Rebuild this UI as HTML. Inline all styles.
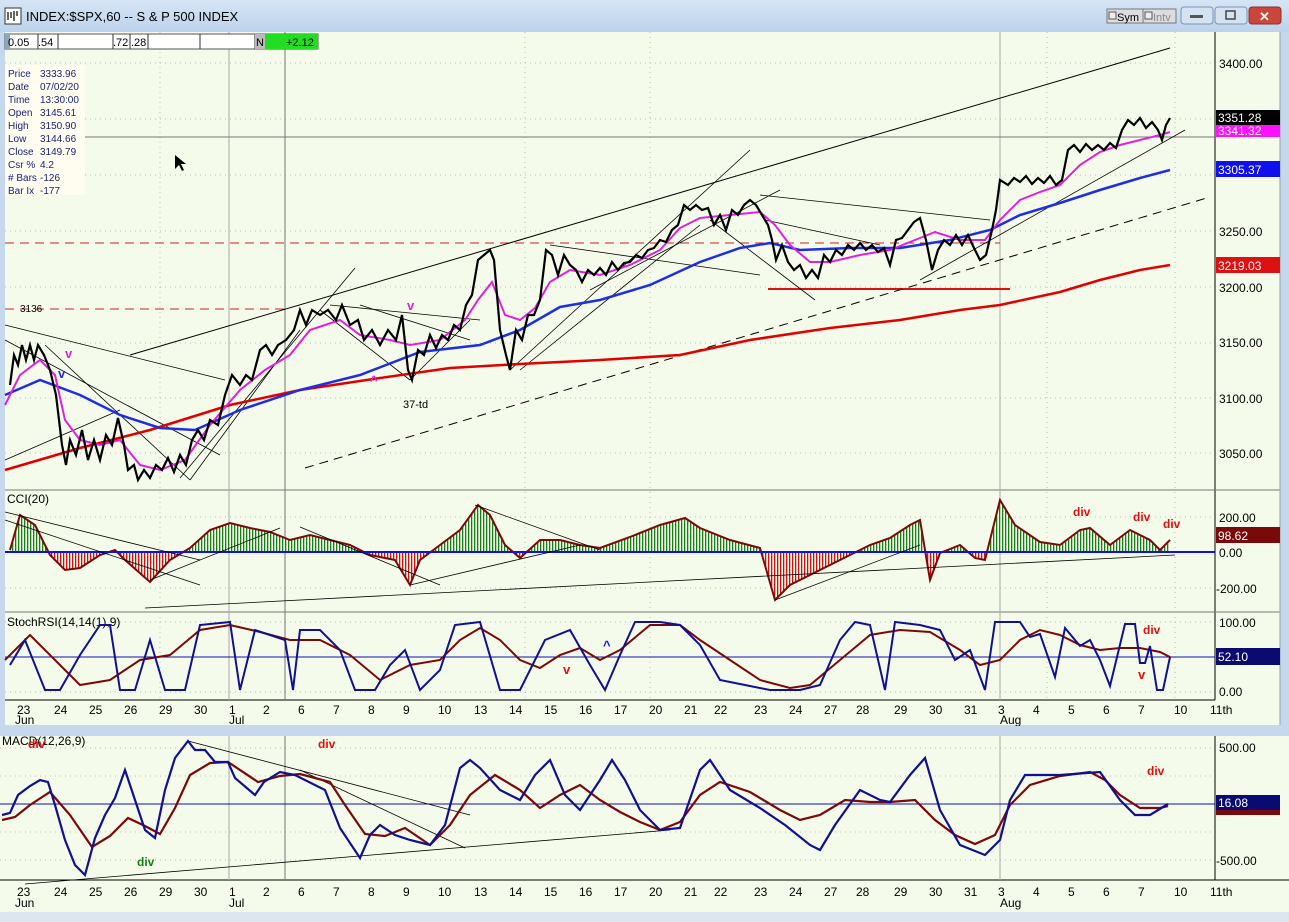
<!DOCTYPE html>
<html><head><meta charset="utf-8"><style>
body{margin:0;width:1289px;height:922px;overflow:hidden;background:#dfe8f2;font-family:"Liberation Sans",sans-serif}
svg{display:block}
text{font-family:"Liberation Sans",sans-serif}
</style></head><body>
<svg width="1289" height="922" viewBox="0 0 1289 922" xmlns="http://www.w3.org/2000/svg">
<defs>
<linearGradient id="tb" x1="0" y1="0" x2="0" y2="1"><stop offset="0" stop-color="#d6e5f5"/><stop offset="1" stop-color="#bcd3ec"/></linearGradient>
<pattern id="gp" width="3" height="10" patternUnits="userSpaceOnUse"><rect width="3" height="10" fill="#f5fbea"/><rect width="1.3" height="10" fill="#138013"/></pattern>
<pattern id="rp" width="3" height="10" patternUnits="userSpaceOnUse"><rect width="3" height="10" fill="#f5fbea"/><rect width="1.3" height="10" fill="#d01010"/></pattern>
<clipPath id="above"><rect x="0" y="480" width="1215" height="72"/></clipPath>
<clipPath id="below"><rect x="0" y="552" width="1215" height="60"/></clipPath>
</defs>
<!-- window frame -->
<rect x="0" y="0" width="1289" height="922" fill="#c5d8ee"/>
<rect x="0" y="0" width="1289" height="32" fill="url(#tb)"/>
<rect x="5" y="8" width="16" height="16" fill="#fff" stroke="#333"/>
<path d="M8 20v-8M11 18v-6M14 21v-10M17 16v-5" stroke="#000" stroke-width="1.2"/>
<text x="26" y="21" font-size="13" fill="#000">INDEX:$SPX,60 -- S &amp; P 500 INDEX</text>
<rect x="1107" y="9" width="36" height="14" fill="#ddd" stroke="#777"/><rect x="1109" y="12" width="7" height="7" fill="#eee" stroke="#555"/><text x="1117" y="21" font-size="11">Sym</text>
<rect x="1143" y="9" width="33" height="14" fill="#ddd" stroke="#777"/><rect x="1145" y="12" width="7" height="7" fill="#eee" stroke="#555"/><text x="1153" y="21" font-size="11" fill="#888">Intv</text>
<rect x="1181" y="7" width="32" height="17" rx="3" fill="#d5e2f0" stroke="#7b93b3"/><rect x="1190" y="15" width="13" height="3" fill="#555"/>
<rect x="1215" y="7" width="32" height="17" rx="3" fill="#d5e2f0" stroke="#7b93b3"/><rect x="1226" y="11" width="9" height="8" fill="none" stroke="#444" stroke-width="1.5"/>
<rect x="1249" y="7" width="32" height="17" rx="3" fill="#c9463a" stroke="#8a3030"/><text x="1259" y="21" font-size="13" fill="#fff" font-weight="bold">✕</text>
<!-- top chart area -->
<rect x="5" y="32" width="1275" height="693" fill="#f5fbea"/>
<rect x="1215" y="32" width="65" height="693" fill="#f5fbea"/>
<line x1="1215" y1="32" x2="1215" y2="700" stroke="#000"/>
<line x1="5" y1="490" x2="1280" y2="490" stroke="#777"/>
<line x1="5" y1="612" x2="1280" y2="612" stroke="#777"/>
<line x1="5" y1="700" x2="1215" y2="700" stroke="#000"/>
<line x1="1280" y1="32" x2="1280" y2="725" stroke="#8aa"/>
<!-- grid dotted -->
<g stroke="#b9c0b0" stroke-dasharray="1,4">
<line x1="5" y1="63" x2="1215" y2="63"/><line x1="5" y1="119" x2="1215" y2="119"/><line x1="5" y1="175" x2="1215" y2="175"/><line x1="5" y1="231" x2="1215" y2="231"/><line x1="5" y1="287" x2="1215" y2="287"/><line x1="5" y1="343" x2="1215" y2="343"/><line x1="5" y1="398" x2="1215" y2="398"/><line x1="5" y1="453" x2="1215" y2="453"/>
<line x1="5" y1="517" x2="1215" y2="517"/><line x1="5" y1="588" x2="1215" y2="588"/>
<line x1="5" y1="622" x2="1215" y2="622"/><line x1="5" y1="692" x2="1215" y2="692"/>
<line x1="160" y1="32" x2="160" y2="700"/><line x1="525" y1="32" x2="525" y2="700"/><line x1="650" y1="32" x2="650" y2="700"/><line x1="1047" y1="32" x2="1047" y2="700"/><line x1="1175" y1="32" x2="1175" y2="700"/>
</g>
<line x1="229" y1="32" x2="229" y2="700" stroke="#aaa"/>
<line x1="1000" y1="32" x2="1000" y2="700" stroke="#aaa"/>
<line x1="285" y1="32" x2="285" y2="700" stroke="#777"/>
<line x1="5" y1="137" x2="1215" y2="137" stroke="#777"/>
<!-- top info strip -->
<rect x="5" y="34" width="313" height="15" fill="#fff" stroke="#555"/>
<rect x="5" y="34" width="5" height="15" fill="#8ab"/>
<g stroke="#333"><line x1="38" y1="34" x2="38" y2="49"/><line x1="58" y1="34" x2="58" y2="49"/><line x1="113" y1="34" x2="113" y2="49"/><line x1="130" y1="34" x2="130" y2="49"/><line x1="148" y1="34" x2="148" y2="49"/><line x1="200" y1="34" x2="200" y2="49"/><line x1="255" y1="34" x2="255" y2="49"/></g>
<text font-size="11" y="46"><tspan x="8">0.05</tspan><tspan x="38">.54</tspan><tspan x="113">.72</tspan><tspan x="131">.28</tspan></text>
<rect x="255" y="34" width="10" height="15" fill="#bbb"/><text x="256" y="46" font-size="11">N</text>
<rect x="265" y="34" width="53" height="15" fill="#22dd22"/><text x="286" y="46" font-size="11">+2.12</text>
<rect x="5" y="65" width="80" height="130" fill="#fffcf0"/>
<g font-size="10" fill="#1a237e">
<text x="8" y="77">Price</text><text x="40" y="77">3333.96</text>
<text x="8" y="90">Date</text><text x="40" y="90">07/02/20</text>
<text x="8" y="103">Time</text><text x="40" y="103">13:30:00</text>
<text x="8" y="116">Open</text><text x="40" y="116">3145.61</text>
<text x="8" y="129">High</text><text x="40" y="129">3150.90</text>
<text x="8" y="142">Low</text><text x="40" y="142">3144.66</text>
<text x="8" y="155">Close</text><text x="40" y="155">3149.79</text>
<text x="8" y="168">Csr %</text><text x="40" y="168">4.2</text>
<text x="8" y="181"># Bars</text><text x="40" y="181">-126</text>
<text x="8" y="194">Bar Ix</text><text x="40" y="194">-177</text>
</g>
<path d="M175 155 l0 14 l4 -4 l3 6 l2 -1 l-3 -6 l5 0 z" fill="#000"/>
<!-- reference lines -->
<line x1="5" y1="243" x2="1000" y2="243" stroke="#c22" stroke-dasharray="9,6"/>
<line x1="5" y1="309" x2="290" y2="309" stroke="#c22" stroke-dasharray="9,6"/>
<text x="20" y="312" font-size="10">3136</text>
<line x1="768" y1="289" x2="1010" y2="289" stroke="#e01010" stroke-width="2"/>
<line x1="130" y1="355" x2="1170" y2="48" stroke="#000"/>
<line x1="305" y1="468" x2="1210" y2="197" stroke="#000" stroke-dasharray="9,6"/>
<g stroke="#000" stroke-width="0.8" fill="none">
<line x1="5" y1="325" x2="225" y2="380"/><line x1="5" y1="340" x2="220" y2="455"/><line x1="5" y1="460" x2="120" y2="410"/><line x1="45" y1="345" x2="190" y2="480"/>
<line x1="180" y1="478" x2="355" y2="268"/><line x1="190" y1="480" x2="300" y2="330"/><line x1="330" y1="305" x2="480" y2="320"/><line x1="320" y1="310" x2="410" y2="380"/>
<line x1="360" y1="305" x2="470" y2="340"/><line x1="410" y1="380" x2="470" y2="320"/><line x1="510" y1="370" x2="750" y2="150"/><line x1="520" y1="370" x2="700" y2="225"/>
<line x1="550" y1="245" x2="760" y2="275"/><line x1="590" y1="290" x2="780" y2="190"/><line x1="710" y1="220" x2="815" y2="300"/><line x1="760" y1="195" x2="990" y2="220"/>
<line x1="920" y1="280" x2="1185" y2="130"/><line x1="765" y1="220" x2="880" y2="245"/>
</g>
<!-- MAs -->
<polyline fill="none" stroke="#d81b60" stroke-width="0" points=""/>
<polyline fill="none" stroke="#e10000" stroke-width="2.5" points="5,470 80,448 150,430 230,405 300,390 380,378 450,368 520,364 600,360 680,355 750,340 830,328 900,320 960,310 1000,305 1060,292 1100,280 1140,270 1170,265"/>
<polyline fill="none" stroke="#1f2ee0" stroke-width="2.5" points="5,395 40,380 80,395 120,415 160,428 195,430 240,410 300,390 360,375 420,352 480,345 520,330 560,307 600,300 650,285 700,262 740,248 770,243 800,250 850,248 900,248 950,240 990,230 1020,215 1060,203 1100,190 1140,178 1170,170"/>
<polyline fill="none" stroke="#e020e0" stroke-width="2" points="5,405 20,375 40,360 55,375 65,420 80,440 100,445 120,440 140,465 160,470 185,460 210,425 240,390 265,370 290,355 310,330 340,320 360,335 390,340 410,345 440,340 465,320 478,300 492,282 505,315 520,320 535,308 550,282 570,270 600,275 630,265 660,250 680,228 700,218 730,215 760,212 775,225 790,245 810,262 830,262 860,255 890,250 915,240 935,232 960,240 985,240 1000,220 1020,200 1040,192 1060,185 1080,165 1100,152 1120,145 1140,140 1160,135 1170,132"/>
<!-- price bars -->
<polyline fill="none" stroke="#000" stroke-width="2.2" stroke-linejoin="miter" points="10,385 14,355 18,365 22,345 26,360 30,345 34,360 38,345 44,355 50,370 56,395 62,445 66,465 70,440 76,455 82,430 88,460 94,440 100,460 106,435 112,445 118,418 124,445 128,470 134,465 138,480 144,470 150,478 156,465 162,470 168,458 174,472 180,455 186,465 192,440 198,430 204,440 210,420 218,425 225,395 232,375 240,385 246,375 252,380 260,350 266,345 272,355 278,345 286,340 294,330 300,310 306,325 312,310 320,315 328,310 336,320 342,305 350,325 358,320 364,340 372,330 380,345 388,330 396,340 402,315 408,370 412,380 418,350 424,355 430,335 436,348 442,335 448,340 454,325 460,330 466,305 472,295 478,260 484,255 490,250 494,260 500,330 506,355 510,370 516,330 522,340 528,315 534,315 540,300 546,250 552,255 558,275 564,255 570,265 576,270 582,282 588,270 594,275 600,268 606,275 612,262 618,270 624,263 630,262 636,255 642,258 648,250 654,248 660,240 666,242 672,230 678,225 684,205 690,210 696,205 702,210 708,208 714,225 720,215 726,230 732,210 738,215 744,205 750,200 756,205 762,215 768,225 772,240 776,260 782,245 788,262 794,270 800,265 806,278 812,270 818,278 824,255 830,262 836,250 842,255 848,245 854,250 860,243 866,250 872,245 878,252 884,248 890,265 896,240 902,238 908,230 914,222 920,218 926,240 932,270 938,250 944,240 950,245 956,235 962,245 968,235 974,248 980,260 986,255 992,230 996,210 1000,180 1008,185 1014,178 1020,182 1026,176 1032,184 1038,178 1044,183 1050,176 1056,185 1062,180 1068,150 1074,145 1080,152 1086,144 1092,150 1098,145 1104,150 1110,143 1116,148 1122,130 1128,120 1134,125 1140,118 1146,128 1152,122 1158,130 1162,140 1166,125 1170,118"/>
<g fill="#e020e0" font-size="13" font-weight="bold"><text x="65" y="358">v</text><text x="407" y="310">v</text><text x="370" y="385">^</text></g>
<text x="58" y="378" fill="#1f2ee0" font-size="13" font-weight="bold">v</text>
<text x="403" y="408" font-size="11">37-td</text>
<!-- axis labels -->
<g font-size="12" fill="#000">
<text x="1219" y="68">3400.00</text><text x="1219" y="236">3250.00</text><text x="1219" y="292">3200.00</text><text x="1219" y="347">3150.00</text><text x="1219" y="403">3100.00</text><text x="1219" y="458">3050.00</text>
<text x="1219" y="522">200.00</text><text x="1219" y="557">0.00</text><text x="1216" y="593">-200.00</text>
<text x="1219" y="627">100.00</text><text x="1219" y="696">0.00</text>
</g>
<rect x="1216" y="110" width="64" height="15" fill="#000"/><text x="1218" y="122" font-size="12" fill="#fff">3351.28</text>
<rect x="1216" y="125" width="64" height="12" fill="#ff10ff"/><text x="1218" y="135" font-size="12" fill="#fff">3341.32</text>
<rect x="1216" y="161" width="64" height="16" fill="#1010ee"/><text x="1218" y="174" font-size="12" fill="#fff">3305.37</text>
<rect x="1216" y="257" width="64" height="16" fill="#dd1111"/><text x="1218" y="270" font-size="12" fill="#fff">3219.03</text>
<rect x="1216" y="527" width="64" height="16" fill="#7a0a0a"/><text x="1218" y="540" font-size="12" fill="#fff">98.62</text>
<rect x="1216" y="648" width="64" height="17" fill="#0a0a70"/><text x="1218" y="661" font-size="12" fill="#fff">52.10</text>
<!-- CCI -->
<text x="7" y="503" font-size="12">CCI(20)</text>
<polygon id="cci" fill="url(#gp)" clip-path="url(#above)" points="10,552 10,550 20,515 35,525 50,555 65,570 80,568 100,555 115,550 125,560 150,582 170,560 190,548 210,530 230,523 250,528 270,532 290,540 310,535 330,540 350,545 370,555 395,560 410,585 420,560 440,545 460,530 478,505 490,515 505,545 520,558 540,540 560,540 580,545 600,548 630,537 660,525 685,518 700,528 730,540 760,548 775,600 790,585 810,575 830,565 850,555 870,545 890,538 910,525 920,520 930,580 940,553 960,545 975,558 985,560 1000,500 1015,525 1040,542 1060,545 1080,530 1090,528 1110,545 1130,530 1150,540 1160,550 1170,540 1170,552"/>
<polygon fill="url(#rp)" clip-path="url(#below)" points="10,552 10,550 20,515 35,525 50,555 65,570 80,568 100,555 115,550 125,560 150,582 170,560 190,548 210,530 230,523 250,528 270,532 290,540 310,535 330,540 350,545 370,555 395,560 410,585 420,560 440,545 460,530 478,505 490,515 505,545 520,558 540,540 560,540 580,545 600,548 630,537 660,525 685,518 700,528 730,540 760,548 775,600 790,585 810,575 830,565 850,555 870,545 890,538 910,525 920,520 930,580 940,553 960,545 975,558 985,560 1000,500 1015,525 1040,542 1060,545 1080,530 1090,528 1110,545 1130,530 1150,540 1160,550 1170,540 1170,552"/>
<polyline fill="none" stroke="#7a0a0a" stroke-width="2" points="10,550 20,515 35,525 50,555 65,570 80,568 100,555 115,550 125,560 150,582 170,560 190,548 210,530 230,523 250,528 270,532 290,540 310,535 330,540 350,545 370,555 395,560 410,585 420,560 440,545 460,530 478,505 490,515 505,545 520,558 540,540 560,540 580,545 600,548 630,537 660,525 685,518 700,528 730,540 760,548 775,600 790,585 810,575 830,565 850,555 870,545 890,538 910,525 920,520 930,580 940,553 960,545 975,558 985,560 1000,500 1015,525 1040,542 1060,545 1080,530 1090,528 1110,545 1130,530 1150,540 1160,550 1170,540"/>
<line x1="5" y1="552" x2="1215" y2="552" stroke="#1010ee" stroke-width="2"/>
<g stroke="#000" stroke-width="0.8"><line x1="145" y1="608" x2="1175" y2="555"/><line x1="5" y1="520" x2="200" y2="585"/><line x1="150" y1="580" x2="280" y2="528"/><line x1="300" y1="527" x2="440" y2="585"/><line x1="410" y1="585" x2="580" y2="545"/><line x1="475" y1="505" x2="600" y2="550"/><line x1="775" y1="600" x2="920" y2="545"/><line x1="5" y1="512" x2="200" y2="560"/></g>
<g fill="#e01010" font-size="12" font-weight="bold"><text x="1073" y="516">div</text><text x="1133" y="521">div</text><text x="1163" y="528">div</text></g>
<!-- Stoch RSI -->
<text x="7" y="626" font-size="12">StochRSI(14,14(1),9)</text>
<line x1="5" y1="657" x2="1215" y2="657" stroke="#1010aa"/>
<polyline fill="none" stroke="#7a0a0a" stroke-width="2" points="5,660 30,635 55,660 80,685 110,680 140,660 170,655 200,630 230,625 260,632 290,640 320,640 350,655 380,680 410,665 440,660 460,640 480,628 500,640 520,660 540,668 560,655 580,648 600,660 620,650 650,625 680,625 700,640 730,660 760,680 790,688 810,685 840,660 870,635 900,630 930,632 960,650 980,665 1000,660 1020,640 1040,630 1060,635 1080,645 1100,650 1120,648 1140,648 1160,652 1170,657"/>
<polyline fill="none" stroke="#101090" stroke-width="2" points="10,665 25,640 45,690 60,690 80,655 100,625 110,625 120,690 135,690 150,640 165,690 185,690 200,625 230,622 240,690 255,630 270,635 285,640 293,690 300,630 320,630 340,650 355,690 375,690 390,665 405,650 420,690 440,670 455,625 480,622 500,690 520,690 545,640 570,630 590,665 605,690 620,655 635,622 660,622 680,625 700,645 720,680 745,685 770,690 800,690 820,685 840,640 855,622 870,625 885,690 895,622 920,625 940,630 955,660 970,650 985,690 995,622 1020,622 1030,637 1040,634 1055,677 1065,628 1080,646 1090,640 1100,660 1110,686 1125,624 1135,624 1140,663 1145,663 1150,646 1157,690 1163,690 1170,657"/>
<text x="563" y="674" fill="#e01010" font-size="13" font-weight="bold">v</text>
<text x="603" y="650" fill="#1010ee" font-size="13" font-weight="bold">^</text>
<text x="1138" y="679" fill="#e01010" font-size="13" font-weight="bold">v</text>
<text x="1143" y="634" fill="#e01010" font-size="12" font-weight="bold">div</text>
<!-- date axis 1 -->
<g font-size="12" fill="#000">
<text x="17" y="714">23</text><text x="54" y="714">24</text><text x="89" y="714">25</text><text x="124" y="714">26</text><text x="159" y="714">29</text><text x="194" y="714">30</text><text x="229" y="714">1</text><text x="263" y="714">2</text><text x="298" y="714">6</text><text x="333" y="714">7</text><text x="368" y="714">8</text><text x="403" y="714">9</text><text x="438" y="714">10</text><text x="474" y="714">13</text><text x="509" y="714">14</text><text x="544" y="714">15</text><text x="579" y="714">16</text><text x="614" y="714">17</text><text x="649" y="714">20</text><text x="684" y="714">21</text><text x="714" y="714">22</text><text x="754" y="714">23</text><text x="789" y="714">24</text><text x="824" y="714">27</text><text x="856" y="714">28</text><text x="894" y="714">29</text><text x="929" y="714">30</text><text x="964" y="714">31</text><text x="998" y="714">3</text><text x="1033" y="714">4</text><text x="1068" y="714">5</text><text x="1103" y="714">6</text><text x="1138" y="714">7</text><text x="1174" y="714">10</text><text x="1210" y="714">11th</text>
<text x="15" y="724">Jun</text><text x="229" y="724">Jul</text><text x="1000" y="724">Aug</text>
</g>
<!-- bottom window -->
<rect x="0" y="726" width="1289" height="10" fill="#c5d8ee"/>
<rect x="0" y="736" width="1289" height="176" fill="#f5fbea"/>
<line x1="1215" y1="736" x2="1215" y2="880" stroke="#000"/>
<line x1="0" y1="880" x2="1289" y2="880" stroke="#000"/>
<g stroke="#b9c0b0" stroke-dasharray="1,4"><line x1="0" y1="748" x2="1215" y2="748"/><line x1="0" y1="776" x2="1215" y2="776"/><line x1="0" y1="832" x2="1215" y2="832"/><line x1="0" y1="860" x2="1215" y2="860"/></g>
<line x1="229" y1="736" x2="229" y2="880" stroke="#aaa"/><line x1="285" y1="736" x2="285" y2="880" stroke="#777"/><line x1="1000" y1="736" x2="1000" y2="880" stroke="#aaa"/>
<line x1="0" y1="804" x2="1215" y2="804" stroke="#1010aa"/>
<text x="2" y="745" font-size="12">MACD(12,26,9)</text>
<g stroke="#000" stroke-width="0.8"><line x1="25" y1="884" x2="670" y2="830"/><line x1="188" y1="741" x2="470" y2="815"/><line x1="300" y1="770" x2="465" y2="848"/></g>
<polyline fill="none" stroke="#7a0a0a" stroke-width="2.2" points="2,820 15,817 30,805 50,792 70,815 92,847 110,836 128,818 145,826 160,834 175,808 190,775 210,763 228,762 258,782 280,776 300,774 330,782 345,805 365,834 385,836 405,828 430,845 450,825 470,795 495,775 520,790 540,808 560,795 580,785 600,800 620,812 640,822 660,830 680,822 700,795 720,782 750,792 780,810 800,820 820,815 845,800 870,802 890,802 915,800 935,820 955,835 975,844 995,835 1010,805 1030,785 1060,776 1090,772 1105,780 1120,795 1140,808 1160,808 1168,806"/>
<polyline fill="none" stroke="#101090" stroke-width="2.2" points="2,815 10,813 18,795 30,786 40,780 48,782 55,805 65,840 75,865 85,875 95,838 105,815 115,798 125,770 135,800 145,830 155,838 165,790 175,758 188,741 195,750 205,750 215,762 228,762 235,778 255,795 264,782 280,772 295,775 325,790 340,828 360,858 370,835 380,825 395,835 410,840 430,845 445,825 460,768 470,760 480,768 500,790 520,800 535,775 550,760 565,795 580,810 600,780 612,760 625,780 640,810 660,830 680,828 700,770 710,760 730,790 760,808 785,825 810,845 820,850 835,825 860,790 880,800 890,802 910,775 925,758 940,810 960,845 985,855 1000,840 1010,800 1025,775 1060,775 1100,772 1120,800 1135,815 1150,815 1168,804"/>
<g fill="#e01010" font-size="12" font-weight="bold"><text x="28" y="748">div</text><text x="318" y="748">div</text><text x="1147" y="775">div</text></g>
<text x="137" y="866" fill="#138013" font-size="12" font-weight="bold">div</text>
<g font-size="12"><text x="1219" y="752">500.00</text><text x="1216" y="865">-500.00</text></g>
<rect x="1216" y="795" width="64" height="15" fill="#0a0a70"/><text x="1218" y="807" font-size="12" fill="#fff">16.08</text>
<rect x="1216" y="810" width="64" height="5" fill="#7a0a0a"/>
<g font-size="12" fill="#000">
<text x="17" y="896">23</text><text x="54" y="896">24</text><text x="89" y="896">25</text><text x="124" y="896">26</text><text x="159" y="896">29</text><text x="194" y="896">30</text><text x="229" y="896">1</text><text x="263" y="896">2</text><text x="298" y="896">6</text><text x="333" y="896">7</text><text x="368" y="896">8</text><text x="403" y="896">9</text><text x="438" y="896">10</text><text x="474" y="896">13</text><text x="509" y="896">14</text><text x="544" y="896">15</text><text x="579" y="896">16</text><text x="614" y="896">17</text><text x="649" y="896">20</text><text x="684" y="896">21</text><text x="714" y="896">22</text><text x="754" y="896">23</text><text x="789" y="896">24</text><text x="824" y="896">27</text><text x="856" y="896">28</text><text x="894" y="896">29</text><text x="929" y="896">30</text><text x="964" y="896">31</text><text x="998" y="896">3</text><text x="1033" y="896">4</text><text x="1068" y="896">5</text><text x="1103" y="896">6</text><text x="1138" y="896">7</text><text x="1174" y="896">10</text><text x="1210" y="896">11th</text>
<text x="15" y="907">Jun</text><text x="229" y="907">Jul</text><text x="1000" y="907">Aug</text>
</g>
<rect x="0" y="912" width="1289" height="10" fill="#dde6ef"/>
</svg>
</body></html>
